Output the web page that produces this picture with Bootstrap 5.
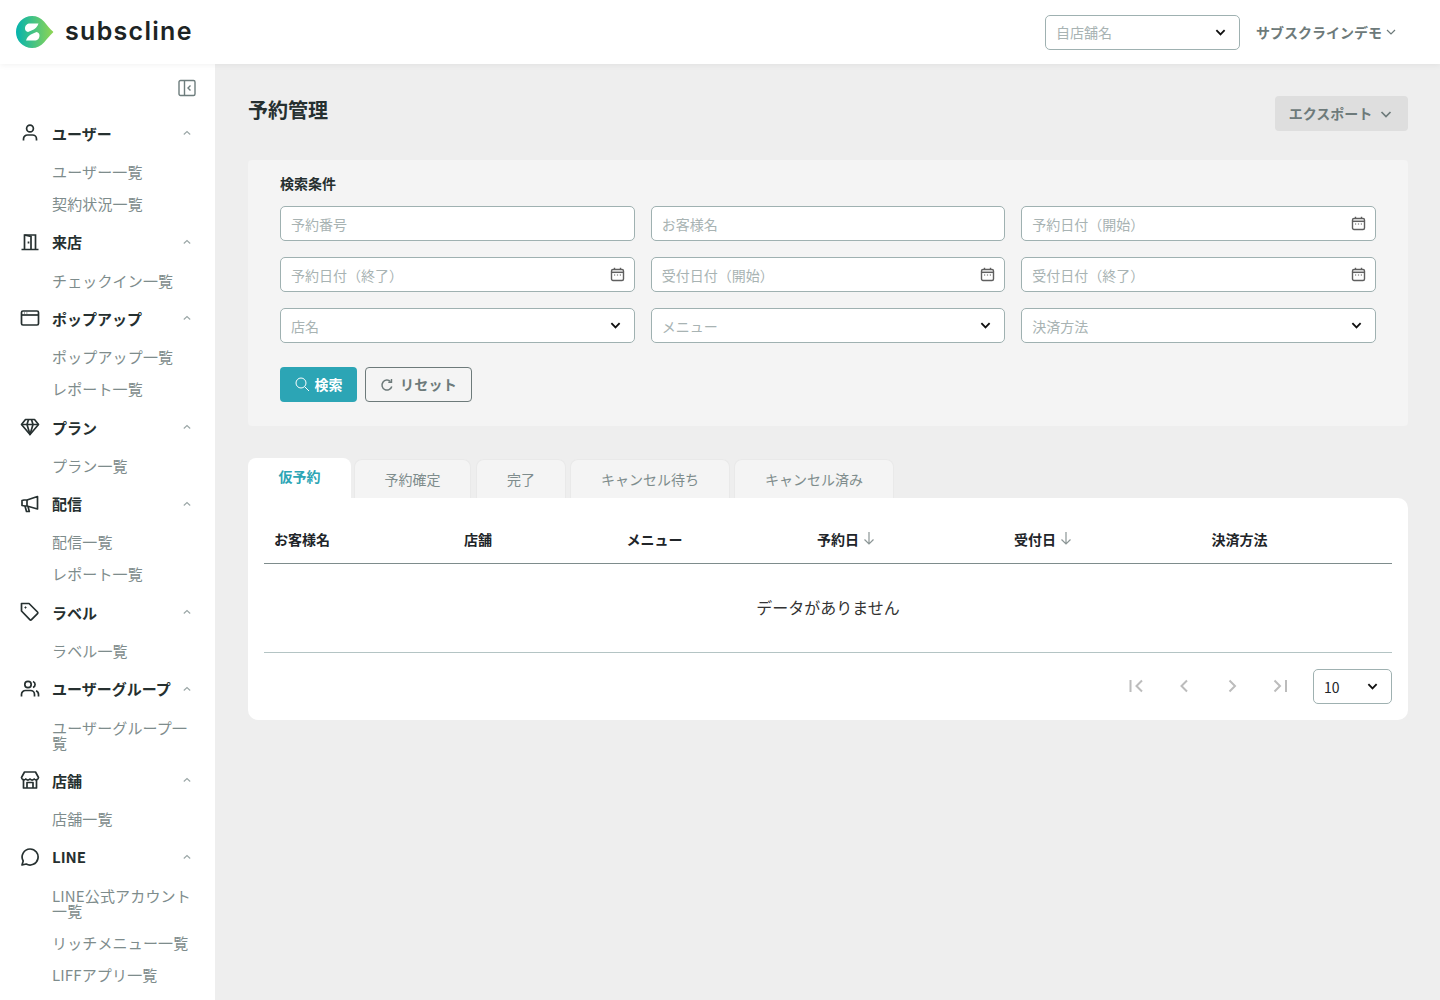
<!DOCTYPE html>
<html lang="ja">
<head>
  <meta charset="UTF-8" />
  <meta name="viewport" content="width=device-width, initial-scale=1.0"/>
  <title>予約管理</title>
  <link href="https://cdn.jsdelivr.net/npm/bootstrap@5.3.3/dist/css/bootstrap.min.css" rel="stylesheet" />
  <style>
    html, body { height: 1000px; overflow: hidden; }
    body { font-family: "Noto Sans CJK JP", "Noto Sans", sans-serif; background: #eeeeee; color: #212529; font-size: 14px; }
    svg { display: block; flex: none; }
    .top-bar { height: 64px; background: #fff; box-shadow: 0 1px 6px rgba(0,0,0,.06); position: relative; z-index: 2; padding-left: 16px; }
    .logo-word { font-family: Inter, sans-serif; font-weight: 600; font-size: 25px; color: #1d2424; margin-left: 11px; margin-bottom: 2px; letter-spacing: 1.3px; line-height: 1; }
    .demo-user { font-weight: 700; color: #6d7a7a; width: 184px; gap: 4px; }
    .side-nav { width: 215px; flex: none; background: #fff; height: 936px; overflow: hidden; padding: 15px 19px 0 20px; }
    .side-toggle { height: 18px; margin-bottom: 14px; color: #6d7d7d; }
    .side-head { height: 44.6px; color: #263030; font-weight: 700; font-size: 15px; line-height: 1; }
    .side-head .side-ico { width: 20px; height: 20px; margin-right: 12px; color: #263030; stroke-width: 1.7; }
    .side-head .side-caret { margin-left: auto; margin-right: 5px; color: #9aa6a6; }
    .side-sub { display: block; padding: 8.6px 0 8.4px 32px; font-size: 15px; line-height: 15px; letter-spacing: .15px; color: #7e8c8c; text-decoration: none; margin-right: -3px; }
    .main-area { flex: 1; padding: 32px 32px 0 33px; min-width: 0; }
    .page-title { font-size: 20px; font-weight: 700; color: #263030; margin: 0 0 2px; line-height: 28px; }
    .export-btn { background: #dedede; color: #6d7a7a; font-weight: 700; font-size: 14px; width: 133px; height: 35px; border: 0; border-radius: 4px; gap: 8px; padding: 0 2px 0 0; }
    .search-panel { background: #f4f4f4; border-radius: 4px; margin-top: 29px; height: 266px; padding: 13px 32px 0; }
    .search-label { font-size: 14px; font-weight: 700; color: #263030; line-height: 20px; margin-bottom: 13px; }
    .form-grid { display: grid; grid-template-columns: repeat(3, 1fr); gap: 16px; }
    .form-control, .form-select { height: 35px; font-size: 14px; border: 1px solid #9fb1b1; border-radius: 5px; padding: 0 10px; line-height: 33px; background-color: #fff; color: #a8b3b3; box-shadow: none; }
    .form-select { padding: 1px 30px 0 10px; background-image: url("data:image/svg+xml,%3csvg xmlns='http://www.w3.org/2000/svg' viewBox='0 0 12 12'%3e%3cpath fill='none' stroke='%23111' stroke-width='2' d='M1.500 3.500 6 8l4.500-4.500'/%3e%3c/svg%3e"); background-size: 11px 11px; background-position: right 13px center; }
    .form-control::placeholder { color: #a8b3b3; opacity: 1; }
    .shop-pick { width: 195px; margin-right: 16px; padding-top: 0; padding-bottom: 2px; }
    .date-ico { position: absolute; right: 10px; top: 10px; color: #5f5f5f; }
    .btn-row { margin-top: 24px; gap: 8px; }
    .find-btn, .clear-btn { height: 35px; border-radius: 4px; font-size: 14px; font-weight: 700; padding: 0; gap: 5px; }
    .find-btn { width: 77px; background: #2ca5b5; color: #fff; border: 0; }
    .clear-btn { width: 107px; background: transparent; color: #6d7a7a; border: 1px solid #6d7a7a; letter-spacing: .3px; gap: 6px; }
    .tab-strip { margin-top: 32px; height: 40px; gap: 4px; align-items: flex-end; }
    .tab-item { height: 39px; background: #f4f4f4; border: 1px solid #e9e9e9; border-bottom: 0; border-radius: 8px 8px 0 0; color: #7e8c8c; font-size: 14px; }
    .tab-item.tab-on { height: 40px; background: #fff; border: 0; color: #2ca5b5; font-weight: 700; padding-bottom: 3px; margin-right: -1px; }
    .tab-gap { margin-left: 1px; }
    .data-card { background: #fff; border-radius: 0 10px 10px 10px; height: 222px; padding: 18px 16px 0; }
    .data-table { margin: 0; table-layout: fixed; width: 100%; color: #212529; }
    .data-table th { font-size: 14px; font-weight: 700; height: 47px; padding: 0 10px; border-bottom: 1px solid #7e8c8c; vertical-align: middle; color: #212529; }
    .data-table td { height: 89px; font-size: 16px; text-align: center; vertical-align: middle; border-bottom: 1px solid #b4c4c4; color: #333; padding: 0 0 2px; }
    .sort-cell { gap: 4px; }
    .sort-cell svg { color: #8c9696; margin-top: -3px; }
    .pager-row { margin-top: 16px; }
    .pager-ico { width: 48px; color: #bcbcbc; }
    .pager-size { width: 79px; margin-left: 9px; color: #212529; }
  </style>
</head>
<body>

  <!-- ヘッダー -->
  <header class="top-bar d-flex align-items-center">
    <svg width="38" height="32" viewBox="0 0 38 32" class="logo-mark">
      <defs>
        <linearGradient id="logoGrad" x1="0" y1="0" x2="1" y2="0">
          <stop offset="0" stop-color="#05b3ae"/>
          <stop offset="1" stop-color="#8fd552"/>
        </linearGradient>
      </defs>
      <path d="M16 0C21 0 25 2 28 5.500C31 9 34 13 37 15.500Q37.600 16 37 16.500C34 19 31 23 28 26.500C25 30 21 32 16 32A16 16 0 0 1 16 0Z" fill="url(#logoGrad)"/>
      <path d="M9 12.500C9 9.500 11 7.500 14 7.500H22.500C21.500 11 19 13 16 14.200L12 16C10 15.500 9 14.500 9 12.500Z" fill="#fff"/>
      <path d="M23.500 19.500C23.500 22.500 21.500 24.500 18.500 24.500H10C11 21 13.500 19 16.500 17.800L20.500 16C22.500 16.500 23.500 17.500 23.500 19.500Z" fill="#fff"/>
    </svg>
    <span class="logo-word">subscline</span>
    <select class="form-select shop-pick ms-auto"><option>自店舗名</option></select>
    <div class="demo-user d-flex align-items-center">サブスクラインデモ
      <svg width="10" height="10" viewBox="0 0 10 10" fill="none" stroke="currentColor" stroke-width="1.200"><path d="M1 3l4 4 4-4"/></svg>
    </div>
  </header>

  <div class="d-flex">
    <!-- サイドメニュー -->
    <nav class="side-nav">
      <div class="side-toggle d-flex justify-content-end">
        <svg width="18" height="18" viewBox="0 0 18 18" fill="none" stroke="currentColor" stroke-width="1.400"><rect x="1" y="1.500" width="16" height="15" rx="1.500"/><path d="M6.500 1.500v15M12.500 6.500L10 9l2.500 2.500"/></svg>
      </div>

      <div class="side-head d-flex align-items-center">
        <svg class="side-ico" viewBox="0 0 20 20" fill="none" stroke="currentColor"><circle cx="10" cy="5.500" r="3.400"/><path d="M3.500 17.500v-1.500a4 4 0 0 1 4-4h5a4 4 0 0 1 4 4v1.500"/></svg>
        ユーザー
        <svg class="side-caret" width="8" height="8" viewBox="0 0 8 8" fill="none" stroke="currentColor" stroke-width="1.100"><path d="M.8 5.500L4 2.500l3.200 3"/></svg>
      </div>
      <a class="side-sub" href="#">ユーザー一覧</a>
      <a class="side-sub" href="#">契約状況一覧</a>

      <div class="side-head d-flex align-items-center">
        <svg class="side-ico" viewBox="0 0 20 20" fill="none" stroke="currentColor"><path d="M1.500 17.500h17M4.500 17.500V3h11v14.500"/><path d="M4.500 3l6.500 1.500v13"/><path d="M8.500 9.500v2"/></svg>
        来店
        <svg class="side-caret" width="8" height="8" viewBox="0 0 8 8" fill="none" stroke="currentColor" stroke-width="1.100"><path d="M.8 5.500L4 2.500l3.200 3"/></svg>
      </div>
      <a class="side-sub" href="#">チェックイン一覧</a>

      <div class="side-head d-flex align-items-center">
        <svg class="side-ico" viewBox="0 0 20 20" fill="none" stroke="currentColor"><rect x="1.500" y="3" width="17" height="14" rx="1.500"/><path d="M1.500 7h17"/><path d="M4 5h.8M6.500 5h.8" stroke-width="1.200"/></svg>
        ポップアップ
        <svg class="side-caret" width="8" height="8" viewBox="0 0 8 8" fill="none" stroke="currentColor" stroke-width="1.100"><path d="M.8 5.500L4 2.500l3.200 3"/></svg>
      </div>
      <a class="side-sub" href="#">ポップアップ一覧</a>
      <a class="side-sub" href="#">レポート一覧</a>

      <div class="side-head d-flex align-items-center">
        <svg class="side-ico" viewBox="0 0 20 20" fill="none" stroke="currentColor" stroke-linejoin="round"><path d="M5.500 2.500h9l4 5L10 17.500 1.500 7.500z"/><path d="M1.500 7.500h17M7 7.500l3 10 3-10M7 7.500l1.500-5M13 7.500l-1.500-5"/></svg>
        プラン
        <svg class="side-caret" width="8" height="8" viewBox="0 0 8 8" fill="none" stroke="currentColor" stroke-width="1.100"><path d="M.8 5.500L4 2.500l3.200 3"/></svg>
      </div>
      <a class="side-sub" href="#">プラン一覧</a>

      <div class="side-head d-flex align-items-center">
        <svg class="side-ico" viewBox="0 0 20 20" fill="none" stroke="currentColor" stroke-linejoin="round"><path d="M2 6.500v5l3 .5h2L17.500 15V2.500L7 6H4z"/><path d="M7 6v6M5 12l1.500 5.500h2.800L8 12.500"/></svg>
        配信
        <svg class="side-caret" width="8" height="8" viewBox="0 0 8 8" fill="none" stroke="currentColor" stroke-width="1.100"><path d="M.8 5.500L4 2.500l3.200 3"/></svg>
      </div>
      <a class="side-sub" href="#">配信一覧</a>
      <a class="side-sub" href="#">レポート一覧</a>

      <div class="side-head d-flex align-items-center">
        <svg class="side-ico" viewBox="0 0 20 20" fill="none" stroke="currentColor" stroke-linejoin="round"><path d="M2 2h7.500l8.500 8.500a1.200 1.200 0 0 1 0 1.700l-6 6a1.200 1.200 0 0 1-1.700 0L2 9.500z" transform="translate(-.5 -.5)"/><circle cx="5.500" cy="5.500" r=".7" fill="currentColor" stroke-width=".8"/></svg>
        ラベル
        <svg class="side-caret" width="8" height="8" viewBox="0 0 8 8" fill="none" stroke="currentColor" stroke-width="1.100"><path d="M.8 5.500L4 2.500l3.200 3"/></svg>
      </div>
      <a class="side-sub" href="#">ラベル一覧</a>

      <div class="side-head d-flex align-items-center">
        <svg class="side-ico" viewBox="0 0 20 20" fill="none" stroke="currentColor"><circle cx="8" cy="5.500" r="3.200"/><path d="M1.500 17.500v-2a4 4 0 0 1 4-4h5a4 4 0 0 1 4 4v2M13 2.500a3.200 3.200 0 0 1 0 6M16 11.700a4 4 0 0 1 2.500 3.800v2"/></svg>
        ユーザーグループ
        <svg class="side-caret" width="8" height="8" viewBox="0 0 8 8" fill="none" stroke="currentColor" stroke-width="1.100"><path d="M.8 5.500L4 2.500l3.200 3"/></svg>
      </div>
      <a class="side-sub" href="#">ユーザーグループ一覧</a>

      <div class="side-head d-flex align-items-center">
        <svg class="side-ico" viewBox="0 0 20 20" fill="none" stroke="currentColor" stroke-linejoin="round"><path d="M4.500 2h11l3 5.500a2.500 2.500 0 0 1-4.300 1.500 3 3 0 0 1-4.200 0 3 3 0 0 1-4.200 0A2.500 2.500 0 0 1 1.500 7.500z"/><path d="M3.500 10v8h13v-8M7 18v-5.500h6V18"/></svg>
        店舗
        <svg class="side-caret" width="8" height="8" viewBox="0 0 8 8" fill="none" stroke="currentColor" stroke-width="1.100"><path d="M.8 5.500L4 2.500l3.200 3"/></svg>
      </div>
      <a class="side-sub" href="#">店舗一覧</a>

      <div class="side-head d-flex align-items-center">
        <svg class="side-ico" viewBox="0 0 20 20" fill="none" stroke="currentColor" stroke-linejoin="round"><path d="M10 2a8 8 0 1 1-3.800 15L2 18l1.200-4A8 8 0 0 1 10 2z"/></svg>
        LINE
        <svg class="side-caret" width="8" height="8" viewBox="0 0 8 8" fill="none" stroke="currentColor" stroke-width="1.100"><path d="M.8 5.500L4 2.500l3.200 3"/></svg>
      </div>
      <a class="side-sub" href="#">LINE公式アカウント一覧</a>
      <a class="side-sub" href="#">リッチメニュー一覧</a>
      <a class="side-sub" href="#">LIFFアプリ一覧</a>
    </nav>

    <!-- メイン -->
    <main class="main-area">
      <div class="d-flex justify-content-between align-items-start">
        <h1 class="page-title">予約管理</h1>
        <button class="export-btn d-flex align-items-center justify-content-center" type="button">エクスポート
          <svg width="12" height="12" viewBox="0 0 12 12" fill="none" stroke="currentColor" stroke-width="1.700"><path d="M1.500 4L6 8.500 10.500 4"/></svg>
        </button>
      </div>

      <section class="search-panel">
        <div class="search-label">検索条件</div>
        <div class="form-grid" id="fields"></div>
        <div class="btn-row d-flex">
          <button class="find-btn d-flex align-items-center justify-content-center" type="button">
            <svg width="15" height="15" viewBox="0 0 15 15" fill="none" stroke="currentColor" stroke-width="1"><circle cx="6" cy="6" r="5"/><path d="M9.700 9.700L14 14"/></svg>
            検索
          </button>
          <button class="clear-btn d-flex align-items-center justify-content-center" type="button">
            <svg width="14" height="14" viewBox="0 0 14 14" fill="none" stroke="currentColor" stroke-width="1.500"><path d="M11.800 8.500A5 5 0 1 1 10.500 3.500"/><path d="M11.500 1v3.200H8.300" stroke-width="1.400"/></svg>
            リセット
          </button>
        </div>
      </section>

      <div class="tab-strip d-flex">
        <div class="tab-item tab-on d-flex align-items-center justify-content-center" style="width:103px">仮予約</div>
        <div class="tab-item d-flex align-items-center justify-content-center" style="width:117px">予約確定</div>
        <div class="tab-item tab-gap d-flex align-items-center justify-content-center" style="width:90px">完了</div>
        <div class="tab-item d-flex align-items-center justify-content-center" style="width:160px">キャンセル待ち</div>
        <div class="tab-item d-flex align-items-center justify-content-center" style="width:160px">キャンセル済み</div>
      </div>

      <section class="data-card">
        <table class="table data-table">
          <thead>
            <tr>
              <th style="width:190px">お客様名</th>
              <th style="width:162.500px">店舗</th>
              <th style="width:190.500px">メニュー</th>
              <th style="width:197px"><span class="sort-cell d-flex align-items-center">予約日
                <svg width="12" height="14" viewBox="0 0 12 14" fill="none" stroke="currentColor" stroke-width="1.200"><path d="M6 1v12M1.500 8.500L6 13l4.500-4.500"/></svg></span></th>
              <th style="width:197.500px"><span class="sort-cell d-flex align-items-center">受付日
                <svg width="12" height="14" viewBox="0 0 12 14" fill="none" stroke="currentColor" stroke-width="1.200"><path d="M6 1v12M1.500 8.500L6 13l4.500-4.500"/></svg></span></th>
              <th>決済方法</th>
            </tr>
          </thead>
          <tbody>
            <tr><td colspan="6">データがありません</td></tr>
          </tbody>
        </table>
        <div class="pager-row d-flex justify-content-end align-items-center">
          <div class="pager-ico d-flex justify-content-center"><svg width="16" height="16" viewBox="0 0 16 16" fill="none" stroke="currentColor" stroke-width="2"><path d="M2.500 2v12M14 2.500L8.500 8l5.500 5.500"/></svg></div>
          <div class="pager-ico d-flex justify-content-center"><svg width="16" height="16" viewBox="0 0 16 16" fill="none" stroke="currentColor" stroke-width="2"><path d="M11 2.500L5.500 8l5.500 5.500"/></svg></div>
          <div class="pager-ico d-flex justify-content-center"><svg width="16" height="16" viewBox="0 0 16 16" fill="none" stroke="currentColor" stroke-width="2"><path d="M5.500 2.500L11 8l-5.500 5.500"/></svg></div>
          <div class="pager-ico d-flex justify-content-center"><svg width="16" height="16" viewBox="0 0 16 16" fill="none" stroke="currentColor" stroke-width="2"><path d="M14 2v12M2.500 2.500L8 8l-5.500 5.500"/></svg></div>
          <select class="form-select pager-size"><option>10</option></select>
        </div>
      </section>
    </main>
  </div>

  <script src="https://cdn.jsdelivr.net/npm/bootstrap@5.3.3/dist/js/bootstrap.bundle.min.js"></script>
  <script>
    // 検索フォームの項目
    const campos = [
      ["text", "予約番号"], ["text", "お客様名"], ["date", "予約日付（開始）"],
      ["date", "予約日付（終了）"], ["date", "受付日付（開始）"], ["date", "受付日付（終了）"],
      ["select", "店名"], ["select", "メニュー"], ["select", "決済方法"]
    ];
    const calendario = `<svg class="date-ico" width="15" height="15" viewBox="0 0 15 15" fill="none" stroke="currentColor" stroke-width="1.400"><rect x="1.500" y="2.500" width="12" height="11" rx="1.500"/><path d="M4.500 .8v2M10.500 .8v2"/><path d="M1.500 5.300h12" stroke-width="1.500"/><path d="M4 8h1.200M6.900 8h1.200M9.800 8h1.200" stroke-width="1"/></svg>`;
    document.getElementById("fields").innerHTML = campos.map(([tipo, texto]) => {
      if (tipo === "select") return `<select class="form-select"><option>${texto}</option></select>`;
      const icono = tipo === "date" ? calendario : "";
      return `<div class="position-relative"><input type="text" class="form-control" placeholder="${texto}">${icono}</div>`;
    }).join("");
  </script>
</body>
</html>
